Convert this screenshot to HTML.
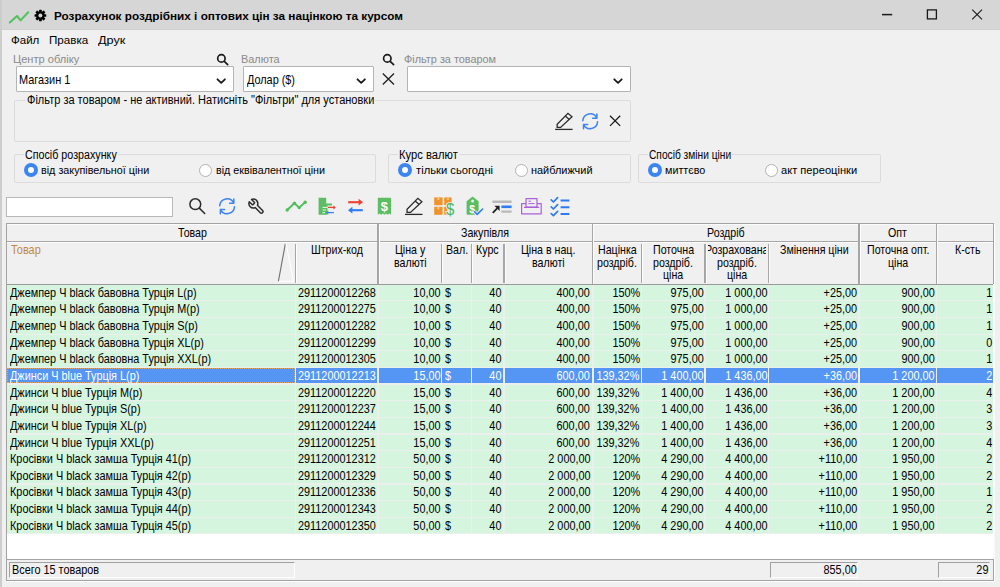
<!DOCTYPE html>
<html lang="uk">
<head>
<meta charset="utf-8">
<title>Розрахунок роздрібних і оптових цін за націнкою та курсом</title>
<style>
html,body{margin:0;padding:0;}
body{width:1000px;height:587px;overflow:hidden;background:#f0f0f0;position:relative;font-family:"Liberation Sans",sans-serif;}
.t{position:absolute;white-space:pre;}
.b{position:absolute;box-sizing:border-box;}
.clip{position:absolute;overflow:hidden;}
svg{position:absolute;overflow:visible;}
.combo{position:absolute;box-sizing:border-box;background:#fff;border:1px solid #b4b4b4;border-radius:1px;}
.grp{position:absolute;box-sizing:border-box;border:1px solid #dcdcdc;border-radius:2px;}
.lgbg{position:absolute;background:#f0f0f0;}
.radio{position:absolute;box-sizing:border-box;width:13px;height:13px;border-radius:50%;background:#fff;border:1px solid #b2b2b2;}
.radio.on{width:14px;height:14px;border:4.2px solid #3d84f4;background:#fff;}
.hsep{position:absolute;background:#a6a6a6;}
</style>
</head>
<body>
<!-- title bar -->
<div class="b" style="left:0;top:0;width:1000px;height:29.5px;background:#d6d6d6;border-bottom:1px solid #d0d0d0"></div>
<div class="b" style="left:0;top:0;width:1.5px;height:587px;background:#cdcdcd"></div>
<svg style="left:0;top:0" width="60" height="30" viewBox="0 0 60 30">
  <polyline points="9.8,22.6 17,16 20.6,20.4 28.2,12.2" fill="none" stroke="#4fc35c" stroke-width="2" stroke-linecap="round" stroke-linejoin="round"/>
  <g transform="translate(40.4,15.5) scale(0.9)">
    <g fill="#000">
      <circle r="4.6"/>
      <rect x="-1.5" y="-6.5" width="3" height="13" rx="0.6"/>
      <rect x="-1.5" y="-6.5" width="3" height="13" rx="0.6" transform="rotate(45)"/>
      <rect x="-1.5" y="-6.5" width="3" height="13" rx="0.6" transform="rotate(90)"/>
      <rect x="-1.5" y="-6.5" width="3" height="13" rx="0.6" transform="rotate(135)"/>
    </g>
    <circle r="2.2" fill="#d6d6d6"/>
  </g>
</svg>
<svg style="left:870px;top:0" width="130" height="30" viewBox="870 0 130 30">
  <line x1="882" y1="14.6" x2="892.2" y2="14.6" stroke="#1a1a1a" stroke-width="1.5"/>
  <rect x="927.4" y="9.9" width="9" height="9" fill="none" stroke="#1a1a1a" stroke-width="1.3"/>
  <path d="M972.2 9.7 L982 19.3 M982 9.7 L972.2 19.3" stroke="#1a1a1a" stroke-width="1.1" fill="none"/>
</svg>

<!-- combos -->
<div class="combo" style="left:16px;top:66px;width:218px;height:26px"></div>
<div class="combo" style="left:243px;top:66px;width:131px;height:26px"></div>
<div class="combo" style="left:407px;top:66px;width:224px;height:26px"></div>
<svg style="left:0;top:50px" width="1000" height="100" viewBox="0 50 1000 100">
  <g fill="none" stroke="#1a1a1a" stroke-width="1.8" stroke-linecap="round" stroke-linejoin="round">
    <polyline points="217.5,79.3 221.2,82.9 224.9,79.3"/>
    <polyline points="357.5,79.3 361.2,82.9 364.9,79.3"/>
    <polyline points="614.3,79.3 618,82.9 621.7,79.3"/>
  </g>
  <g fill="none" stroke="#1a1a1a" stroke-width="1.7" stroke-linecap="round">
    <!-- search icons -->
    <circle cx="221.4" cy="58.4" r="3.7"/><line x1="224.3" y1="61.3" x2="227.7" y2="64.6"/>
    <circle cx="387.3" cy="58.4" r="3.7"/><line x1="390.2" y1="61.3" x2="393.6" y2="64.6"/>
  </g>
  <!-- clear X -->
  <path d="M382.8 73.5 L394 84.5 M394 73.5 L382.8 84.5" stroke="#1a1a1a" stroke-width="1.2" fill="none"/>
  <!-- group box icons -->
  <path d="M610 115.7 L620.2 125.9 M620.2 115.7 L610 125.9" stroke="#1a1a1a" stroke-width="1.3" fill="none"/>
  <path d="M582.82 120.78 A7.4 7.4 0 0 1 596.91 118.17 M596.91 113.97 V118.17 H592.71 M597.58 121.82 A7.4 7.4 0 0 1 583.49 124.43 M583.49 128.63 V124.43 H587.69" fill="none" stroke="#3d84f4" stroke-width="1.5" stroke-linecap="round" stroke-linejoin="round"/>
  <g fill="none" stroke="#2b2b2b" stroke-width="1.3" stroke-linejoin="miter" stroke-linecap="butt"><path d="M555.10 129.40 L572.60 129.40"/><path d="M557.15 127.40 L557.15 124.30 L567.95 113.30 L572.00 116.70 L560.60 127.40 Z M565.25 116.05 L569.30 119.40"/></g>
</svg>

<!-- group boxes -->
<div class="grp" style="left:14px;top:100.3px;width:617px;height:42px"></div>
<div class="lgbg" style="left:25px;top:94px;width:350px;height:12px"></div>
<div class="grp" style="left:14px;top:154px;width:361.5px;height:29px"></div>
<div class="lgbg" style="left:24px;top:150px;width:94px;height:10px"></div>
<div class="grp" style="left:388.3px;top:154px;width:243px;height:29px"></div>
<div class="lgbg" style="left:397.5px;top:150px;width:61.5px;height:10px"></div>
<div class="grp" style="left:638.4px;top:154px;width:243px;height:29px"></div>
<div class="lgbg" style="left:647.5px;top:150px;width:84.5px;height:10px"></div>
<div class="radio on" style="left:23.9px;top:163.1px"></div>
<div class="radio" style="left:199.2px;top:163.6px"></div>
<div class="radio on" style="left:398px;top:163.1px"></div>
<div class="radio" style="left:514.7px;top:163.6px"></div>
<div class="radio on" style="left:647.8px;top:163.1px"></div>
<div class="radio" style="left:764.7px;top:163.6px"></div>

<!-- search box -->
<div class="b" style="left:6.3px;top:197px;width:166.4px;height:19.6px;background:#fff;border:1px solid #b8b8b8"></div>

<svg style="left:180px;top:190px" width="420" height="34" viewBox="180 190 420 34">
  <!-- search -->
  <g fill="none" stroke="#2b2b2b" stroke-width="1.5" stroke-linecap="round">
    <circle cx="195.3" cy="204.2" r="5.4"/><line x1="199.5" y1="208.4" x2="204.7" y2="213.5"/>
  </g>
  <!-- refresh -->
  <path d="M219.72 205.78 A7.4 7.4 0 0 1 233.81 203.17 M233.81 198.97 V203.17 H229.61 M234.48 206.82 A7.4 7.4 0 0 1 220.39 209.43 M220.39 213.63 V209.43 H224.59" fill="none" stroke="#3d84f4" stroke-width="1.5" stroke-linecap="round" stroke-linejoin="round"/>
  <!-- wrench (mirrored feather tool) -->
  <g transform="translate(265.2,197.6) scale(-0.74,0.74)" fill="none" stroke="#2b2b2b" stroke-width="2" stroke-linecap="round" stroke-linejoin="round">
    <path d="M14.7 6.3a1 1 0 0 0 0 1.4l1.6 1.6a1 1 0 0 0 1.4 0l3.77-3.77a6 6 0 0 1-7.94 7.94l-6.91 6.91a2.12 2.12 0 0 1-3-3l6.91-6.91a6 6 0 0 1 7.94-7.94l-3.76 3.76z"/>
  </g>
  <!-- chart -->
  <g stroke="#4fbf5b" fill="#4fbf5b">
    <polyline points="287.2,210 294.4,203.2 299.2,207.6 305.2,202.2" fill="none" stroke-width="1.9" stroke-linejoin="round" stroke-linecap="round"/>
    <circle cx="287.2" cy="210" r="1.7" stroke="none"/><circle cx="294.4" cy="203.2" r="1.7" stroke="none"/><circle cx="299.2" cy="207.6" r="1.7" stroke="none"/><circle cx="305.2" cy="202.2" r="1.7" stroke="none"/>
  </g>
  <!-- doc with arrows -->
  <path d="M318.6 197.8 H326.2 V203.4 H332 V205.4 H327.5 V214.8 H318.6 Z" fill="#5cbd63"/>
  <path d="M322.5 207.4 H327.5 M322.5 210 H326 M322.5 212.6 H325" stroke="#e8f6ea" stroke-width="1" fill="none"/>
  <path d="M328 207.4 H335" stroke="#ea4335" stroke-width="1.3" fill="none"/><path d="M333.4 205.4 L335.8 207.4 L333.4 209.4 Z" fill="#ea4335"/>
  <path d="M327 212.6 H334" stroke="#3d84f4" stroke-width="1.3" fill="none"/><path d="M328.4 210.6 L326 212.6 L328.4 214.6 Z" fill="#3d84f4"/>
  <!-- red/blue arrows -->
  <path d="M348.2 202.2 H359.5" stroke="#ea4335" stroke-width="2.1" fill="none"/><path d="M358.6 198.8 L363 202.2 L358.6 205.6 Z" fill="#ea4335"/>
  <path d="M351.5 210.2 H362.8" stroke="#2f7bf5" stroke-width="2.1" fill="none"/><path d="M352.4 206.8 L348 210.2 L352.4 213.6 Z" fill="#2f7bf5"/>
  <!-- receipt -->
  <path d="M377.8 197.8 H391 V214.8 L389.35 213.4 L387.7 214.8 L386.05 213.4 L384.4 214.8 L382.75 213.4 L381.1 214.8 L379.45 213.4 L377.8 214.8 Z" fill="#5cbd63"/>
  <text x="384.4" y="210.6" font-family="Liberation Sans, sans-serif" font-weight="bold" font-size="13" fill="#fff" text-anchor="middle">$</text>
  <!-- pencil -->
  <g fill="none" stroke="#2b2b2b" stroke-width="1.3" stroke-linejoin="miter" stroke-linecap="butt"><path d="M405.00 214.40 L422.50 214.40"/><path d="M407.05 212.40 L407.05 209.30 L417.85 198.30 L421.90 201.70 L410.50 212.40 Z M415.15 201.05 L419.20 204.40"/></g>
  <!-- boxes + $ -->
  <g fill="#f0932b">
    <rect x="434.2" y="197.4" width="8.4" height="7.8"/><rect x="444.2" y="197.4" width="7.4" height="7.8"/>
    <rect x="434.2" y="206.8" width="8.4" height="8"/><rect x="444.2" y="206.8" width="3" height="8"/>
  </g>
  <g fill="#f7c58a"><rect x="437.4" y="197.4" width="2" height="2.6"/><rect x="446.9" y="197.4" width="2" height="2.6"/><rect x="437.4" y="206.8" width="2" height="2.6"/></g>
  <text x="450.2" y="215.2" font-family="Liberation Sans, sans-serif" font-size="17" transform="translate(450.2 0) scale(0.88 1) translate(-450.2 0)" fill="#4cb85a" text-anchor="middle" stroke="#f0f0f0" stroke-width="1.6" paint-order="stroke">$</text>
  <!-- tag -->
  <path d="M472.6 196.4 L478.6 201.2 V213.6 a1.2 1.2 0 0 1 -1.2 1.2 H467.8 a1.2 1.2 0 0 1 -1.2 -1.2 V201.2 Z" fill="#5cbd63"/>
  <circle cx="472.6" cy="200.9" r="1.5" fill="#f0f0f0"/>
  <text x="472.2" y="213.4" font-family="Liberation Sans, sans-serif" font-weight="bold" font-size="10.5" fill="#fff" text-anchor="middle">$</text>
  <path d="M474.6 211.8 L477.2 214.4 L482.6 209" stroke="#f0f0f0" stroke-width="3.4" fill="none"/>
  <path d="M474.6 211.8 L477.2 214.4 L482.6 209" stroke="#2f7bf5" stroke-width="1.6" fill="none" stroke-linecap="round" stroke-linejoin="round"/>
  <!-- arrow lines -->
  <path d="M492.4 201.8 H511.6 M501.4 211.6 H511.6" stroke="#b9b9b9" stroke-width="2.4" fill="none"/>
  <path d="M501.4 206.8 H511.6" stroke="#2f7bf5" stroke-width="2.6" fill="none"/>
  <path d="M492.8 212.8 L497.6 207.8" stroke="#222" stroke-width="1.8" fill="none"/><path d="M494.4 205.8 H499.6 V211 Z" fill="#222"/>
  <!-- printer -->
  <g fill="none" stroke="#a862d6" stroke-width="1.2" stroke-linejoin="round">
    <path d="M526 203.6 H521.6 V213.8 H541.2 V203.6 H537"/>
    <rect x="526" y="198.6" width="11" height="8.6"/>
    <path d="M524 207.4 H539.2"/>
    <path d="M528.4 201.2 H531 M528.4 203.6 H534.6" stroke-width="1"/>
  </g>
  <!-- checklist -->
  <g fill="none" stroke="#2f7bf5" stroke-linecap="round" stroke-linejoin="round">
    <path d="M551.2 199.9 L553.4 202 L557.6 197.6 M551.2 206.9 L553.4 209 L557.6 204.6 M551.2 213.6 L553.4 215.6 L557.6 211.4" stroke-width="1.7"/>
    <path d="M560.6 200.4 H569.4 M560.6 207.2 H569.4 M560.6 214 H569.4" stroke-width="2" stroke-linecap="butt"/>
  </g>
</svg>


<!-- grid -->
<div class="b" style="left:6.3px;top:223px;width:987.6px;height:358px;background:#fff;border:1px solid #a3a3a3;box-shadow:1px 1px 0 #fff"></div>
<div class="b" style="left:7.3px;top:224px;width:985.6px;height:59.6px;background:#f0f0f0"></div>
<div class="b" style="left:7.3px;top:224px;width:985.6px;height:1px;background:#fdfdfd"></div>
<div class="b" style="left:7.3px;top:240.70px;width:985.70px;height:1.5px;background:#a6a6a6"></div>
<div class="b" style="left:7.3px;top:242.20px;width:985.70px;height:1px;background:#fdfdfd"></div>
<div class="b" style="left:377.10px;top:223.8px;width:1.5px;height:60.00px;background:#a6a6a6"></div>
<div class="b" style="left:378.60px;top:223.8px;width:1px;height:60.00px;background:#fdfdfd"></div>
<div class="b" style="left:591.80px;top:223.8px;width:1.5px;height:60.00px;background:#a6a6a6"></div>
<div class="b" style="left:593.30px;top:223.8px;width:1px;height:60.00px;background:#fdfdfd"></div>
<div class="b" style="left:858.30px;top:223.8px;width:1.5px;height:60.00px;background:#a6a6a6"></div>
<div class="b" style="left:859.80px;top:223.8px;width:1px;height:60.00px;background:#fdfdfd"></div>
<div class="b" style="left:935.60px;top:223.8px;width:1.5px;height:60.00px;background:#a6a6a6"></div>
<div class="b" style="left:937.10px;top:223.8px;width:1px;height:60.00px;background:#fdfdfd"></div>
<div class="b" style="left:294.60px;top:244px;width:1.5px;height:38.60px;background:#a6a6a6"></div>
<div class="b" style="left:296.10px;top:244px;width:1px;height:38.60px;background:#fdfdfd"></div>
<div class="b" style="left:440.60px;top:244px;width:1.5px;height:38.60px;background:#a6a6a6"></div>
<div class="b" style="left:442.10px;top:244px;width:1px;height:38.60px;background:#fdfdfd"></div>
<div class="b" style="left:470.60px;top:244px;width:1.5px;height:38.60px;background:#a6a6a6"></div>
<div class="b" style="left:472.10px;top:244px;width:1px;height:38.60px;background:#fdfdfd"></div>
<div class="b" style="left:503.10px;top:244px;width:1.5px;height:38.60px;background:#a6a6a6"></div>
<div class="b" style="left:504.60px;top:244px;width:1px;height:38.60px;background:#fdfdfd"></div>
<div class="b" style="left:640.60px;top:244px;width:1.5px;height:38.60px;background:#a6a6a6"></div>
<div class="b" style="left:642.10px;top:244px;width:1px;height:38.60px;background:#fdfdfd"></div>
<div class="b" style="left:704.30px;top:244px;width:1.5px;height:38.60px;background:#a6a6a6"></div>
<div class="b" style="left:705.80px;top:244px;width:1px;height:38.60px;background:#fdfdfd"></div>
<div class="b" style="left:767.60px;top:244px;width:1.5px;height:38.60px;background:#a6a6a6"></div>
<div class="b" style="left:769.10px;top:244px;width:1px;height:38.60px;background:#fdfdfd"></div>
<div class="b" style="left:7.3px;top:283.6px;width:985.6px;height:1.2px;background:#9a9a9a"></div>
<svg style="left:270px;top:240px" width="30" height="45" viewBox="270 240 30 45"><path d="M285.3 243.8 L278.4 281.4" stroke="#707070" stroke-width="1.1" fill="none"/><path d="M286.1 243.8 L293.5 281.4 H278.7" stroke="#fff" stroke-width="1.1" fill="none"/></svg>
<div class="b" style="left:7.3px;top:284.6px;width:985.6px;height:249.8px;background:#ebf0ec"></div>
<div class="b" style="left:7.20px;top:284.80px;width:287.40px;height:15.45px;background:#d5f5df"></div>
<div class="b" style="left:296.40px;top:284.80px;width:80.70px;height:15.45px;background:#d5f5df"></div>
<div class="b" style="left:378.90px;top:284.80px;width:61.70px;height:15.45px;background:#d5f5df"></div>
<div class="b" style="left:442.40px;top:284.80px;width:28.20px;height:15.45px;background:#d5f5df"></div>
<div class="b" style="left:472.40px;top:284.80px;width:30.70px;height:15.45px;background:#d5f5df"></div>
<div class="b" style="left:504.90px;top:284.80px;width:86.90px;height:15.45px;background:#d5f5df"></div>
<div class="b" style="left:593.60px;top:284.80px;width:47.00px;height:15.45px;background:#d5f5df"></div>
<div class="b" style="left:642.40px;top:284.80px;width:61.90px;height:15.45px;background:#d5f5df"></div>
<div class="b" style="left:706.10px;top:284.80px;width:61.50px;height:15.45px;background:#d5f5df"></div>
<div class="b" style="left:769.40px;top:284.80px;width:88.90px;height:15.45px;background:#d5f5df"></div>
<div class="b" style="left:860.10px;top:284.80px;width:75.50px;height:15.45px;background:#d5f5df"></div>
<div class="b" style="left:937.40px;top:284.80px;width:55.20px;height:15.45px;background:#d5f5df"></div>
<div class="b" style="left:7.20px;top:301.44px;width:287.40px;height:15.45px;background:#d5f5df"></div>
<div class="b" style="left:296.40px;top:301.44px;width:80.70px;height:15.45px;background:#d5f5df"></div>
<div class="b" style="left:378.90px;top:301.44px;width:61.70px;height:15.45px;background:#d5f5df"></div>
<div class="b" style="left:442.40px;top:301.44px;width:28.20px;height:15.45px;background:#d5f5df"></div>
<div class="b" style="left:472.40px;top:301.44px;width:30.70px;height:15.45px;background:#d5f5df"></div>
<div class="b" style="left:504.90px;top:301.44px;width:86.90px;height:15.45px;background:#d5f5df"></div>
<div class="b" style="left:593.60px;top:301.44px;width:47.00px;height:15.45px;background:#d5f5df"></div>
<div class="b" style="left:642.40px;top:301.44px;width:61.90px;height:15.45px;background:#d5f5df"></div>
<div class="b" style="left:706.10px;top:301.44px;width:61.50px;height:15.45px;background:#d5f5df"></div>
<div class="b" style="left:769.40px;top:301.44px;width:88.90px;height:15.45px;background:#d5f5df"></div>
<div class="b" style="left:860.10px;top:301.44px;width:75.50px;height:15.45px;background:#d5f5df"></div>
<div class="b" style="left:937.40px;top:301.44px;width:55.20px;height:15.45px;background:#d5f5df"></div>
<div class="b" style="left:7.20px;top:318.09px;width:287.40px;height:15.45px;background:#d5f5df"></div>
<div class="b" style="left:296.40px;top:318.09px;width:80.70px;height:15.45px;background:#d5f5df"></div>
<div class="b" style="left:378.90px;top:318.09px;width:61.70px;height:15.45px;background:#d5f5df"></div>
<div class="b" style="left:442.40px;top:318.09px;width:28.20px;height:15.45px;background:#d5f5df"></div>
<div class="b" style="left:472.40px;top:318.09px;width:30.70px;height:15.45px;background:#d5f5df"></div>
<div class="b" style="left:504.90px;top:318.09px;width:86.90px;height:15.45px;background:#d5f5df"></div>
<div class="b" style="left:593.60px;top:318.09px;width:47.00px;height:15.45px;background:#d5f5df"></div>
<div class="b" style="left:642.40px;top:318.09px;width:61.90px;height:15.45px;background:#d5f5df"></div>
<div class="b" style="left:706.10px;top:318.09px;width:61.50px;height:15.45px;background:#d5f5df"></div>
<div class="b" style="left:769.40px;top:318.09px;width:88.90px;height:15.45px;background:#d5f5df"></div>
<div class="b" style="left:860.10px;top:318.09px;width:75.50px;height:15.45px;background:#d5f5df"></div>
<div class="b" style="left:937.40px;top:318.09px;width:55.20px;height:15.45px;background:#d5f5df"></div>
<div class="b" style="left:7.20px;top:334.74px;width:287.40px;height:15.45px;background:#d5f5df"></div>
<div class="b" style="left:296.40px;top:334.74px;width:80.70px;height:15.45px;background:#d5f5df"></div>
<div class="b" style="left:378.90px;top:334.74px;width:61.70px;height:15.45px;background:#d5f5df"></div>
<div class="b" style="left:442.40px;top:334.74px;width:28.20px;height:15.45px;background:#d5f5df"></div>
<div class="b" style="left:472.40px;top:334.74px;width:30.70px;height:15.45px;background:#d5f5df"></div>
<div class="b" style="left:504.90px;top:334.74px;width:86.90px;height:15.45px;background:#d5f5df"></div>
<div class="b" style="left:593.60px;top:334.74px;width:47.00px;height:15.45px;background:#d5f5df"></div>
<div class="b" style="left:642.40px;top:334.74px;width:61.90px;height:15.45px;background:#d5f5df"></div>
<div class="b" style="left:706.10px;top:334.74px;width:61.50px;height:15.45px;background:#d5f5df"></div>
<div class="b" style="left:769.40px;top:334.74px;width:88.90px;height:15.45px;background:#d5f5df"></div>
<div class="b" style="left:860.10px;top:334.74px;width:75.50px;height:15.45px;background:#d5f5df"></div>
<div class="b" style="left:937.40px;top:334.74px;width:55.20px;height:15.45px;background:#d5f5df"></div>
<div class="b" style="left:7.20px;top:351.38px;width:287.40px;height:15.45px;background:#d5f5df"></div>
<div class="b" style="left:296.40px;top:351.38px;width:80.70px;height:15.45px;background:#d5f5df"></div>
<div class="b" style="left:378.90px;top:351.38px;width:61.70px;height:15.45px;background:#d5f5df"></div>
<div class="b" style="left:442.40px;top:351.38px;width:28.20px;height:15.45px;background:#d5f5df"></div>
<div class="b" style="left:472.40px;top:351.38px;width:30.70px;height:15.45px;background:#d5f5df"></div>
<div class="b" style="left:504.90px;top:351.38px;width:86.90px;height:15.45px;background:#d5f5df"></div>
<div class="b" style="left:593.60px;top:351.38px;width:47.00px;height:15.45px;background:#d5f5df"></div>
<div class="b" style="left:642.40px;top:351.38px;width:61.90px;height:15.45px;background:#d5f5df"></div>
<div class="b" style="left:706.10px;top:351.38px;width:61.50px;height:15.45px;background:#d5f5df"></div>
<div class="b" style="left:769.40px;top:351.38px;width:88.90px;height:15.45px;background:#d5f5df"></div>
<div class="b" style="left:860.10px;top:351.38px;width:75.50px;height:15.45px;background:#d5f5df"></div>
<div class="b" style="left:937.40px;top:351.38px;width:55.20px;height:15.45px;background:#d5f5df"></div>
<div class="b" style="left:7.20px;top:368.02px;width:287.40px;height:15.45px;background:#5596f5;border:1px dotted #dba46a"></div>
<div class="b" style="left:296.40px;top:368.02px;width:80.70px;height:15.45px;background:#5596f5"></div>
<div class="b" style="left:378.90px;top:368.02px;width:61.70px;height:15.45px;background:#5596f5"></div>
<div class="b" style="left:442.40px;top:368.02px;width:28.20px;height:15.45px;background:#5596f5"></div>
<div class="b" style="left:472.40px;top:368.02px;width:30.70px;height:15.45px;background:#5596f5"></div>
<div class="b" style="left:504.90px;top:368.02px;width:86.90px;height:15.45px;background:#5596f5"></div>
<div class="b" style="left:593.60px;top:368.02px;width:47.00px;height:15.45px;background:#5596f5"></div>
<div class="b" style="left:642.40px;top:368.02px;width:61.90px;height:15.45px;background:#5596f5"></div>
<div class="b" style="left:706.10px;top:368.02px;width:61.50px;height:15.45px;background:#5596f5"></div>
<div class="b" style="left:769.40px;top:368.02px;width:88.90px;height:15.45px;background:#5596f5"></div>
<div class="b" style="left:860.10px;top:368.02px;width:75.50px;height:15.45px;background:#5596f5"></div>
<div class="b" style="left:937.40px;top:368.02px;width:55.20px;height:15.45px;background:#5596f5"></div>
<div class="b" style="left:7.20px;top:384.67px;width:287.40px;height:15.45px;background:#d5f5df"></div>
<div class="b" style="left:296.40px;top:384.67px;width:80.70px;height:15.45px;background:#d5f5df"></div>
<div class="b" style="left:378.90px;top:384.67px;width:61.70px;height:15.45px;background:#d5f5df"></div>
<div class="b" style="left:442.40px;top:384.67px;width:28.20px;height:15.45px;background:#d5f5df"></div>
<div class="b" style="left:472.40px;top:384.67px;width:30.70px;height:15.45px;background:#d5f5df"></div>
<div class="b" style="left:504.90px;top:384.67px;width:86.90px;height:15.45px;background:#d5f5df"></div>
<div class="b" style="left:593.60px;top:384.67px;width:47.00px;height:15.45px;background:#d5f5df"></div>
<div class="b" style="left:642.40px;top:384.67px;width:61.90px;height:15.45px;background:#d5f5df"></div>
<div class="b" style="left:706.10px;top:384.67px;width:61.50px;height:15.45px;background:#d5f5df"></div>
<div class="b" style="left:769.40px;top:384.67px;width:88.90px;height:15.45px;background:#d5f5df"></div>
<div class="b" style="left:860.10px;top:384.67px;width:75.50px;height:15.45px;background:#d5f5df"></div>
<div class="b" style="left:937.40px;top:384.67px;width:55.20px;height:15.45px;background:#d5f5df"></div>
<div class="b" style="left:7.20px;top:401.31px;width:287.40px;height:15.45px;background:#d5f5df"></div>
<div class="b" style="left:296.40px;top:401.31px;width:80.70px;height:15.45px;background:#d5f5df"></div>
<div class="b" style="left:378.90px;top:401.31px;width:61.70px;height:15.45px;background:#d5f5df"></div>
<div class="b" style="left:442.40px;top:401.31px;width:28.20px;height:15.45px;background:#d5f5df"></div>
<div class="b" style="left:472.40px;top:401.31px;width:30.70px;height:15.45px;background:#d5f5df"></div>
<div class="b" style="left:504.90px;top:401.31px;width:86.90px;height:15.45px;background:#d5f5df"></div>
<div class="b" style="left:593.60px;top:401.31px;width:47.00px;height:15.45px;background:#d5f5df"></div>
<div class="b" style="left:642.40px;top:401.31px;width:61.90px;height:15.45px;background:#d5f5df"></div>
<div class="b" style="left:706.10px;top:401.31px;width:61.50px;height:15.45px;background:#d5f5df"></div>
<div class="b" style="left:769.40px;top:401.31px;width:88.90px;height:15.45px;background:#d5f5df"></div>
<div class="b" style="left:860.10px;top:401.31px;width:75.50px;height:15.45px;background:#d5f5df"></div>
<div class="b" style="left:937.40px;top:401.31px;width:55.20px;height:15.45px;background:#d5f5df"></div>
<div class="b" style="left:7.20px;top:417.96px;width:287.40px;height:15.45px;background:#d5f5df"></div>
<div class="b" style="left:296.40px;top:417.96px;width:80.70px;height:15.45px;background:#d5f5df"></div>
<div class="b" style="left:378.90px;top:417.96px;width:61.70px;height:15.45px;background:#d5f5df"></div>
<div class="b" style="left:442.40px;top:417.96px;width:28.20px;height:15.45px;background:#d5f5df"></div>
<div class="b" style="left:472.40px;top:417.96px;width:30.70px;height:15.45px;background:#d5f5df"></div>
<div class="b" style="left:504.90px;top:417.96px;width:86.90px;height:15.45px;background:#d5f5df"></div>
<div class="b" style="left:593.60px;top:417.96px;width:47.00px;height:15.45px;background:#d5f5df"></div>
<div class="b" style="left:642.40px;top:417.96px;width:61.90px;height:15.45px;background:#d5f5df"></div>
<div class="b" style="left:706.10px;top:417.96px;width:61.50px;height:15.45px;background:#d5f5df"></div>
<div class="b" style="left:769.40px;top:417.96px;width:88.90px;height:15.45px;background:#d5f5df"></div>
<div class="b" style="left:860.10px;top:417.96px;width:75.50px;height:15.45px;background:#d5f5df"></div>
<div class="b" style="left:937.40px;top:417.96px;width:55.20px;height:15.45px;background:#d5f5df"></div>
<div class="b" style="left:7.20px;top:434.61px;width:287.40px;height:15.45px;background:#d5f5df"></div>
<div class="b" style="left:296.40px;top:434.61px;width:80.70px;height:15.45px;background:#d5f5df"></div>
<div class="b" style="left:378.90px;top:434.61px;width:61.70px;height:15.45px;background:#d5f5df"></div>
<div class="b" style="left:442.40px;top:434.61px;width:28.20px;height:15.45px;background:#d5f5df"></div>
<div class="b" style="left:472.40px;top:434.61px;width:30.70px;height:15.45px;background:#d5f5df"></div>
<div class="b" style="left:504.90px;top:434.61px;width:86.90px;height:15.45px;background:#d5f5df"></div>
<div class="b" style="left:593.60px;top:434.61px;width:47.00px;height:15.45px;background:#d5f5df"></div>
<div class="b" style="left:642.40px;top:434.61px;width:61.90px;height:15.45px;background:#d5f5df"></div>
<div class="b" style="left:706.10px;top:434.61px;width:61.50px;height:15.45px;background:#d5f5df"></div>
<div class="b" style="left:769.40px;top:434.61px;width:88.90px;height:15.45px;background:#d5f5df"></div>
<div class="b" style="left:860.10px;top:434.61px;width:75.50px;height:15.45px;background:#d5f5df"></div>
<div class="b" style="left:937.40px;top:434.61px;width:55.20px;height:15.45px;background:#d5f5df"></div>
<div class="b" style="left:7.20px;top:451.25px;width:287.40px;height:15.45px;background:#d5f5df"></div>
<div class="b" style="left:296.40px;top:451.25px;width:80.70px;height:15.45px;background:#d5f5df"></div>
<div class="b" style="left:378.90px;top:451.25px;width:61.70px;height:15.45px;background:#d5f5df"></div>
<div class="b" style="left:442.40px;top:451.25px;width:28.20px;height:15.45px;background:#d5f5df"></div>
<div class="b" style="left:472.40px;top:451.25px;width:30.70px;height:15.45px;background:#d5f5df"></div>
<div class="b" style="left:504.90px;top:451.25px;width:86.90px;height:15.45px;background:#d5f5df"></div>
<div class="b" style="left:593.60px;top:451.25px;width:47.00px;height:15.45px;background:#d5f5df"></div>
<div class="b" style="left:642.40px;top:451.25px;width:61.90px;height:15.45px;background:#d5f5df"></div>
<div class="b" style="left:706.10px;top:451.25px;width:61.50px;height:15.45px;background:#d5f5df"></div>
<div class="b" style="left:769.40px;top:451.25px;width:88.90px;height:15.45px;background:#d5f5df"></div>
<div class="b" style="left:860.10px;top:451.25px;width:75.50px;height:15.45px;background:#d5f5df"></div>
<div class="b" style="left:937.40px;top:451.25px;width:55.20px;height:15.45px;background:#d5f5df"></div>
<div class="b" style="left:7.20px;top:467.89px;width:287.40px;height:15.45px;background:#d5f5df"></div>
<div class="b" style="left:296.40px;top:467.89px;width:80.70px;height:15.45px;background:#d5f5df"></div>
<div class="b" style="left:378.90px;top:467.89px;width:61.70px;height:15.45px;background:#d5f5df"></div>
<div class="b" style="left:442.40px;top:467.89px;width:28.20px;height:15.45px;background:#d5f5df"></div>
<div class="b" style="left:472.40px;top:467.89px;width:30.70px;height:15.45px;background:#d5f5df"></div>
<div class="b" style="left:504.90px;top:467.89px;width:86.90px;height:15.45px;background:#d5f5df"></div>
<div class="b" style="left:593.60px;top:467.89px;width:47.00px;height:15.45px;background:#d5f5df"></div>
<div class="b" style="left:642.40px;top:467.89px;width:61.90px;height:15.45px;background:#d5f5df"></div>
<div class="b" style="left:706.10px;top:467.89px;width:61.50px;height:15.45px;background:#d5f5df"></div>
<div class="b" style="left:769.40px;top:467.89px;width:88.90px;height:15.45px;background:#d5f5df"></div>
<div class="b" style="left:860.10px;top:467.89px;width:75.50px;height:15.45px;background:#d5f5df"></div>
<div class="b" style="left:937.40px;top:467.89px;width:55.20px;height:15.45px;background:#d5f5df"></div>
<div class="b" style="left:7.20px;top:484.54px;width:287.40px;height:15.45px;background:#d5f5df"></div>
<div class="b" style="left:296.40px;top:484.54px;width:80.70px;height:15.45px;background:#d5f5df"></div>
<div class="b" style="left:378.90px;top:484.54px;width:61.70px;height:15.45px;background:#d5f5df"></div>
<div class="b" style="left:442.40px;top:484.54px;width:28.20px;height:15.45px;background:#d5f5df"></div>
<div class="b" style="left:472.40px;top:484.54px;width:30.70px;height:15.45px;background:#d5f5df"></div>
<div class="b" style="left:504.90px;top:484.54px;width:86.90px;height:15.45px;background:#d5f5df"></div>
<div class="b" style="left:593.60px;top:484.54px;width:47.00px;height:15.45px;background:#d5f5df"></div>
<div class="b" style="left:642.40px;top:484.54px;width:61.90px;height:15.45px;background:#d5f5df"></div>
<div class="b" style="left:706.10px;top:484.54px;width:61.50px;height:15.45px;background:#d5f5df"></div>
<div class="b" style="left:769.40px;top:484.54px;width:88.90px;height:15.45px;background:#d5f5df"></div>
<div class="b" style="left:860.10px;top:484.54px;width:75.50px;height:15.45px;background:#d5f5df"></div>
<div class="b" style="left:937.40px;top:484.54px;width:55.20px;height:15.45px;background:#d5f5df"></div>
<div class="b" style="left:7.20px;top:501.19px;width:287.40px;height:15.45px;background:#d5f5df"></div>
<div class="b" style="left:296.40px;top:501.19px;width:80.70px;height:15.45px;background:#d5f5df"></div>
<div class="b" style="left:378.90px;top:501.19px;width:61.70px;height:15.45px;background:#d5f5df"></div>
<div class="b" style="left:442.40px;top:501.19px;width:28.20px;height:15.45px;background:#d5f5df"></div>
<div class="b" style="left:472.40px;top:501.19px;width:30.70px;height:15.45px;background:#d5f5df"></div>
<div class="b" style="left:504.90px;top:501.19px;width:86.90px;height:15.45px;background:#d5f5df"></div>
<div class="b" style="left:593.60px;top:501.19px;width:47.00px;height:15.45px;background:#d5f5df"></div>
<div class="b" style="left:642.40px;top:501.19px;width:61.90px;height:15.45px;background:#d5f5df"></div>
<div class="b" style="left:706.10px;top:501.19px;width:61.50px;height:15.45px;background:#d5f5df"></div>
<div class="b" style="left:769.40px;top:501.19px;width:88.90px;height:15.45px;background:#d5f5df"></div>
<div class="b" style="left:860.10px;top:501.19px;width:75.50px;height:15.45px;background:#d5f5df"></div>
<div class="b" style="left:937.40px;top:501.19px;width:55.20px;height:15.45px;background:#d5f5df"></div>
<div class="b" style="left:7.20px;top:517.83px;width:287.40px;height:15.45px;background:#d5f5df"></div>
<div class="b" style="left:296.40px;top:517.83px;width:80.70px;height:15.45px;background:#d5f5df"></div>
<div class="b" style="left:378.90px;top:517.83px;width:61.70px;height:15.45px;background:#d5f5df"></div>
<div class="b" style="left:442.40px;top:517.83px;width:28.20px;height:15.45px;background:#d5f5df"></div>
<div class="b" style="left:472.40px;top:517.83px;width:30.70px;height:15.45px;background:#d5f5df"></div>
<div class="b" style="left:504.90px;top:517.83px;width:86.90px;height:15.45px;background:#d5f5df"></div>
<div class="b" style="left:593.60px;top:517.83px;width:47.00px;height:15.45px;background:#d5f5df"></div>
<div class="b" style="left:642.40px;top:517.83px;width:61.90px;height:15.45px;background:#d5f5df"></div>
<div class="b" style="left:706.10px;top:517.83px;width:61.50px;height:15.45px;background:#d5f5df"></div>
<div class="b" style="left:769.40px;top:517.83px;width:88.90px;height:15.45px;background:#d5f5df"></div>
<div class="b" style="left:860.10px;top:517.83px;width:75.50px;height:15.45px;background:#d5f5df"></div>
<div class="b" style="left:937.40px;top:517.83px;width:55.20px;height:15.45px;background:#d5f5df"></div>
<div class="b" style="left:992.6px;top:284.3px;width:2.4px;height:274.4px;background:#fafafa"></div>
<!-- footer -->
<div class="b" style="left:7.3px;top:558.7px;width:985.6px;height:21.3px;background:#f0f0f0;border-top:1px solid #a3a3a3"></div>
<div class="b" style="left:8.5px;top:562px;width:286px;height:16.4px;border:1px solid #fff;border-top-color:#a0a0a0;border-left-color:#a0a0a0"></div>
<div class="b" style="left:770.4px;top:562px;width:87.6px;height:16.4px;border:1px solid #fff;border-top-color:#a0a0a0;border-left-color:#a0a0a0"></div>
<div class="b" style="left:937.9px;top:562px;width:52.6px;height:16.4px;border:1px solid #fff;border-top-color:#a0a0a0;border-left-color:#a0a0a0"></div>
<div class="t" style="left:53.90px;top:9px;font-size:11.8px;line-height:14.16px;color:#000;transform:scaleX(0.9963);transform-origin:left top;font-weight:bold;">Розрахунок роздрібних і оптових цін за націнкою та курсом</div>
<div class="t" style="left:11.35px;top:33px;font-size:11.7px;line-height:14.04px;color:#000;transform:scaleX(0.9849);transform-origin:left top;">Файл</div>
<div class="t" style="left:49.10px;top:33px;font-size:11.7px;line-height:14.04px;color:#000;transform:scaleX(0.9953);transform-origin:left top;">Правка</div>
<div class="t" style="left:97.60px;top:33px;font-size:11.7px;line-height:14.04px;color:#000;transform:scaleX(1.0812);transform-origin:left top;">Друк</div>
<div class="t" style="left:13.35px;top:53px;font-size:11.5px;line-height:13.80px;color:#8a8a8a;transform:scaleX(0.9634);transform-origin:left top;">Центр обліку</div>
<div class="t" style="left:240.60px;top:53px;font-size:11.5px;line-height:13.80px;color:#8a8a8a;transform:scaleX(0.9487);transform-origin:left top;">Валюта</div>
<div class="t" style="left:404.10px;top:53px;font-size:11.5px;line-height:13.80px;color:#8a8a8a;transform:scaleX(0.9452);transform-origin:left top;">Фільтр за товаром</div>
<div class="t" style="left:18.60px;top:72px;font-size:13px;line-height:15.60px;color:#000;transform:scaleX(0.8410);transform-origin:left top;">Магазин 1</div>
<div class="t" style="left:246.90px;top:72px;font-size:13px;line-height:15.60px;color:#000;transform:scaleX(0.8355);transform-origin:left top;">Долар ($)</div>
<div class="t" style="left:26.60px;top:93px;font-size:12.5px;line-height:15.00px;color:#000;transform:scaleX(0.8817);transform-origin:left top;">Фільтр за товаром - не активний. Натисніть "Фільтри" для установки</div>
<div class="t" style="left:25.35px;top:148px;font-size:12.5px;line-height:15.00px;color:#000;transform:scaleX(0.8573);transform-origin:left top;">Спосіб розрахунку</div>
<div class="t" style="left:40.85px;top:164px;font-size:11.5px;line-height:13.80px;color:#000;transform:scaleX(0.9361);transform-origin:left top;">від закупівельної ціни</div>
<div class="t" style="left:216.35px;top:164px;font-size:11.5px;line-height:13.80px;color:#000;transform:scaleX(0.9334);transform-origin:left top;">від еквівалентної ціни</div>
<div class="t" style="left:399.40px;top:148px;font-size:12.5px;line-height:15.00px;color:#000;transform:scaleX(0.8958);transform-origin:left top;">Курс валют</div>
<div class="t" style="left:415.60px;top:164px;font-size:11.5px;line-height:13.80px;color:#000;transform:scaleX(0.9758);transform-origin:left top;">тільки сьогодні</div>
<div class="t" style="left:531.40px;top:164px;font-size:11.5px;line-height:13.80px;color:#000;transform:scaleX(0.9493);transform-origin:left top;">найближчий</div>
<div class="t" style="left:648.90px;top:148px;font-size:12.5px;line-height:15.00px;color:#000;transform:scaleX(0.8163);transform-origin:left top;">Спосіб зміни ціни</div>
<div class="t" style="left:665.10px;top:164px;font-size:11.5px;line-height:13.80px;color:#000;transform:scaleX(0.9348);transform-origin:left top;">миттєво</div>
<div class="t" style="left:781.30px;top:164px;font-size:11.5px;line-height:13.80px;color:#000;transform:scaleX(0.9660);transform-origin:left top;">акт переоцінки</div>
<div class="t" style="left:178.03px;top:225px;font-size:13px;line-height:15.60px;color:#000;transform:scaleX(0.8180);transform-origin:left top;">Товар</div>
<div class="t" style="left:461.39px;top:225px;font-size:13px;line-height:15.60px;color:#000;transform:scaleX(0.8180);transform-origin:left top;">Закупівля</div>
<div class="t" style="left:707.13px;top:225px;font-size:13px;line-height:15.60px;color:#000;transform:scaleX(0.8180);transform-origin:left top;">Роздріб</div>
<div class="t" style="left:888.40px;top:225px;font-size:13px;line-height:15.60px;color:#000;transform:scaleX(0.8180);transform-origin:left top;">Опт</div>
<div class="t" style="left:310.75px;top:242px;font-size:13px;line-height:15.60px;color:#000;transform:scaleX(0.8180);transform-origin:left top;">Штрих-код</div>
<div class="t" style="left:395.40px;top:242px;font-size:13px;line-height:15.60px;color:#000;transform:scaleX(0.8180);transform-origin:left top;">Ціна у</div>
<div class="t" style="left:394.23px;top:255px;font-size:13px;line-height:15.60px;color:#000;transform:scaleX(0.8180);transform-origin:left top;">валюті</div>
<div class="t" style="left:446.41px;top:242px;font-size:13px;line-height:15.60px;color:#000;transform:scaleX(0.8180);transform-origin:left top;">Вал.</div>
<div class="t" style="left:476.43px;top:242px;font-size:13px;line-height:15.60px;color:#000;transform:scaleX(0.8180);transform-origin:left top;">Курс</div>
<div class="t" style="left:521.15px;top:242px;font-size:13px;line-height:15.60px;color:#000;transform:scaleX(0.8180);transform-origin:left top;">Ціна в нац.</div>
<div class="t" style="left:532.03px;top:255px;font-size:13px;line-height:15.60px;color:#000;transform:scaleX(0.8180);transform-origin:left top;">валюті</div>
<div class="t" style="left:597.74px;top:242px;font-size:13px;line-height:15.60px;color:#000;transform:scaleX(0.8180);transform-origin:left top;">Націнка</div>
<div class="t" style="left:597.16px;top:255px;font-size:13px;line-height:15.60px;color:#000;transform:scaleX(0.8180);transform-origin:left top;">роздріб.</div>
<div class="t" style="left:652.80px;top:242px;font-size:13px;line-height:15.60px;color:#000;transform:scaleX(0.8180);transform-origin:left top;">Поточна</div>
<div class="t" style="left:653.41px;top:255px;font-size:13px;line-height:15.60px;color:#000;transform:scaleX(0.8180);transform-origin:left top;">роздріб.</div>
<div class="t" style="left:663.23px;top:267px;font-size:13px;line-height:15.60px;color:#000;transform:scaleX(0.8180);transform-origin:left top;">ціна</div>
<div class="clip" style="left:707.90px;width:57.90px;top:241px;height:17px"><div class="t" style="left:-2.79px;top:1px;font-size:13px;line-height:15.60px;color:#000;transform:scaleX(0.8180);transform-origin:left top;">Розрахована</div></div>
<div class="t" style="left:716.91px;top:255px;font-size:13px;line-height:15.60px;color:#000;transform:scaleX(0.8180);transform-origin:left top;">роздріб.</div>
<div class="t" style="left:726.73px;top:267px;font-size:13px;line-height:15.60px;color:#000;transform:scaleX(0.8180);transform-origin:left top;">ціна</div>
<div class="t" style="left:779.55px;top:242px;font-size:13px;line-height:15.60px;color:#000;transform:scaleX(0.8180);transform-origin:left top;">Змінення ціни</div>
<div class="t" style="left:866.67px;top:242px;font-size:13px;line-height:15.60px;color:#000;transform:scaleX(0.8180);transform-origin:left top;">Поточна опт.</div>
<div class="t" style="left:887.73px;top:255px;font-size:13px;line-height:15.60px;color:#000;transform:scaleX(0.8180);transform-origin:left top;">ціна</div>
<div class="t" style="left:954.96px;top:242px;font-size:13px;line-height:15.60px;color:#000;transform:scaleX(0.8180);transform-origin:left top;">К-сть</div>
<div class="t" style="left:10.60px;top:242px;font-size:13px;line-height:15.60px;color:#c08a3e;transform:scaleX(0.8420);transform-origin:left top;">Товар</div>
<div class="t" style="left:9.70px;top:285px;font-size:13px;line-height:15.60px;color:#000;transform:scaleX(0.8360);transform-origin:left top;">Джемпер Ч black бавовна Турція L(р)</div>
<div class="t" style="left:298.20px;top:285px;font-size:13px;line-height:15.60px;color:#000;transform:scaleX(0.8360);transform-origin:left top;">2911200012268</div>
<div class="t" style="right:559.90px;top:285px;font-size:13px;line-height:15.60px;color:#000;transform:scaleX(0.8360);transform-origin:right top;">10,00</div>
<div class="t" style="left:445.00px;top:285px;font-size:13px;line-height:15.60px;color:#000;transform:scaleX(0.8360);transform-origin:left top;">$</div>
<div class="t" style="right:498.60px;top:285px;font-size:13px;line-height:15.60px;color:#000;transform:scaleX(0.8360);transform-origin:right top;">40</div>
<div class="t" style="right:409.90px;top:285px;font-size:13px;line-height:15.60px;color:#000;transform:scaleX(0.8360);transform-origin:right top;">400,00</div>
<div class="t" style="right:360.20px;top:285px;font-size:13px;line-height:15.60px;color:#000;transform:scaleX(0.8360);transform-origin:right top;">150%</div>
<div class="t" style="right:296.10px;top:285px;font-size:13px;line-height:15.60px;color:#000;transform:scaleX(0.8360);transform-origin:right top;">975,00</div>
<div class="t" style="right:232.70px;top:285px;font-size:13px;line-height:15.60px;color:#000;transform:scaleX(0.8360);transform-origin:right top;">1 000,00</div>
<div class="t" style="right:143.10px;top:285px;font-size:13px;line-height:15.60px;color:#000;transform:scaleX(0.8360);transform-origin:right top;">+25,00</div>
<div class="t" style="right:65.30px;top:285px;font-size:13px;line-height:15.60px;color:#000;transform:scaleX(0.8360);transform-origin:right top;">900,00</div>
<div class="t" style="right:8.10px;top:285px;font-size:13px;line-height:15.60px;color:#000;transform:scaleX(0.8360);transform-origin:right top;">1</div>
<div class="t" style="left:9.70px;top:301px;font-size:13px;line-height:15.60px;color:#000;transform:scaleX(0.8360);transform-origin:left top;">Джемпер Ч black бавовна Турція M(р)</div>
<div class="t" style="left:298.20px;top:301px;font-size:13px;line-height:15.60px;color:#000;transform:scaleX(0.8360);transform-origin:left top;">2911200012275</div>
<div class="t" style="right:559.90px;top:301px;font-size:13px;line-height:15.60px;color:#000;transform:scaleX(0.8360);transform-origin:right top;">10,00</div>
<div class="t" style="left:445.00px;top:301px;font-size:13px;line-height:15.60px;color:#000;transform:scaleX(0.8360);transform-origin:left top;">$</div>
<div class="t" style="right:498.60px;top:301px;font-size:13px;line-height:15.60px;color:#000;transform:scaleX(0.8360);transform-origin:right top;">40</div>
<div class="t" style="right:409.90px;top:301px;font-size:13px;line-height:15.60px;color:#000;transform:scaleX(0.8360);transform-origin:right top;">400,00</div>
<div class="t" style="right:360.20px;top:301px;font-size:13px;line-height:15.60px;color:#000;transform:scaleX(0.8360);transform-origin:right top;">150%</div>
<div class="t" style="right:296.10px;top:301px;font-size:13px;line-height:15.60px;color:#000;transform:scaleX(0.8360);transform-origin:right top;">975,00</div>
<div class="t" style="right:232.70px;top:301px;font-size:13px;line-height:15.60px;color:#000;transform:scaleX(0.8360);transform-origin:right top;">1 000,00</div>
<div class="t" style="right:143.10px;top:301px;font-size:13px;line-height:15.60px;color:#000;transform:scaleX(0.8360);transform-origin:right top;">+25,00</div>
<div class="t" style="right:65.30px;top:301px;font-size:13px;line-height:15.60px;color:#000;transform:scaleX(0.8360);transform-origin:right top;">900,00</div>
<div class="t" style="right:8.10px;top:301px;font-size:13px;line-height:15.60px;color:#000;transform:scaleX(0.8360);transform-origin:right top;">1</div>
<div class="t" style="left:9.70px;top:318px;font-size:13px;line-height:15.60px;color:#000;transform:scaleX(0.8360);transform-origin:left top;">Джемпер Ч black бавовна Турція S(р)</div>
<div class="t" style="left:298.20px;top:318px;font-size:13px;line-height:15.60px;color:#000;transform:scaleX(0.8360);transform-origin:left top;">2911200012282</div>
<div class="t" style="right:559.90px;top:318px;font-size:13px;line-height:15.60px;color:#000;transform:scaleX(0.8360);transform-origin:right top;">10,00</div>
<div class="t" style="left:445.00px;top:318px;font-size:13px;line-height:15.60px;color:#000;transform:scaleX(0.8360);transform-origin:left top;">$</div>
<div class="t" style="right:498.60px;top:318px;font-size:13px;line-height:15.60px;color:#000;transform:scaleX(0.8360);transform-origin:right top;">40</div>
<div class="t" style="right:409.90px;top:318px;font-size:13px;line-height:15.60px;color:#000;transform:scaleX(0.8360);transform-origin:right top;">400,00</div>
<div class="t" style="right:360.20px;top:318px;font-size:13px;line-height:15.60px;color:#000;transform:scaleX(0.8360);transform-origin:right top;">150%</div>
<div class="t" style="right:296.10px;top:318px;font-size:13px;line-height:15.60px;color:#000;transform:scaleX(0.8360);transform-origin:right top;">975,00</div>
<div class="t" style="right:232.70px;top:318px;font-size:13px;line-height:15.60px;color:#000;transform:scaleX(0.8360);transform-origin:right top;">1 000,00</div>
<div class="t" style="right:143.10px;top:318px;font-size:13px;line-height:15.60px;color:#000;transform:scaleX(0.8360);transform-origin:right top;">+25,00</div>
<div class="t" style="right:65.30px;top:318px;font-size:13px;line-height:15.60px;color:#000;transform:scaleX(0.8360);transform-origin:right top;">900,00</div>
<div class="t" style="right:8.10px;top:318px;font-size:13px;line-height:15.60px;color:#000;transform:scaleX(0.8360);transform-origin:right top;">1</div>
<div class="t" style="left:9.70px;top:335px;font-size:13px;line-height:15.60px;color:#000;transform:scaleX(0.8360);transform-origin:left top;">Джемпер Ч black бавовна Турція XL(р)</div>
<div class="t" style="left:298.20px;top:335px;font-size:13px;line-height:15.60px;color:#000;transform:scaleX(0.8360);transform-origin:left top;">2911200012299</div>
<div class="t" style="right:559.90px;top:335px;font-size:13px;line-height:15.60px;color:#000;transform:scaleX(0.8360);transform-origin:right top;">10,00</div>
<div class="t" style="left:445.00px;top:335px;font-size:13px;line-height:15.60px;color:#000;transform:scaleX(0.8360);transform-origin:left top;">$</div>
<div class="t" style="right:498.60px;top:335px;font-size:13px;line-height:15.60px;color:#000;transform:scaleX(0.8360);transform-origin:right top;">40</div>
<div class="t" style="right:409.90px;top:335px;font-size:13px;line-height:15.60px;color:#000;transform:scaleX(0.8360);transform-origin:right top;">400,00</div>
<div class="t" style="right:360.20px;top:335px;font-size:13px;line-height:15.60px;color:#000;transform:scaleX(0.8360);transform-origin:right top;">150%</div>
<div class="t" style="right:296.10px;top:335px;font-size:13px;line-height:15.60px;color:#000;transform:scaleX(0.8360);transform-origin:right top;">975,00</div>
<div class="t" style="right:232.70px;top:335px;font-size:13px;line-height:15.60px;color:#000;transform:scaleX(0.8360);transform-origin:right top;">1 000,00</div>
<div class="t" style="right:143.10px;top:335px;font-size:13px;line-height:15.60px;color:#000;transform:scaleX(0.8360);transform-origin:right top;">+25,00</div>
<div class="t" style="right:65.30px;top:335px;font-size:13px;line-height:15.60px;color:#000;transform:scaleX(0.8360);transform-origin:right top;">900,00</div>
<div class="t" style="right:8.10px;top:335px;font-size:13px;line-height:15.60px;color:#000;transform:scaleX(0.8360);transform-origin:right top;">0</div>
<div class="t" style="left:9.70px;top:351px;font-size:13px;line-height:15.60px;color:#000;transform:scaleX(0.8360);transform-origin:left top;">Джемпер Ч black бавовна Турція XXL(р)</div>
<div class="t" style="left:298.20px;top:351px;font-size:13px;line-height:15.60px;color:#000;transform:scaleX(0.8360);transform-origin:left top;">2911200012305</div>
<div class="t" style="right:559.90px;top:351px;font-size:13px;line-height:15.60px;color:#000;transform:scaleX(0.8360);transform-origin:right top;">10,00</div>
<div class="t" style="left:445.00px;top:351px;font-size:13px;line-height:15.60px;color:#000;transform:scaleX(0.8360);transform-origin:left top;">$</div>
<div class="t" style="right:498.60px;top:351px;font-size:13px;line-height:15.60px;color:#000;transform:scaleX(0.8360);transform-origin:right top;">40</div>
<div class="t" style="right:409.90px;top:351px;font-size:13px;line-height:15.60px;color:#000;transform:scaleX(0.8360);transform-origin:right top;">400,00</div>
<div class="t" style="right:360.20px;top:351px;font-size:13px;line-height:15.60px;color:#000;transform:scaleX(0.8360);transform-origin:right top;">150%</div>
<div class="t" style="right:296.10px;top:351px;font-size:13px;line-height:15.60px;color:#000;transform:scaleX(0.8360);transform-origin:right top;">975,00</div>
<div class="t" style="right:232.70px;top:351px;font-size:13px;line-height:15.60px;color:#000;transform:scaleX(0.8360);transform-origin:right top;">1 000,00</div>
<div class="t" style="right:143.10px;top:351px;font-size:13px;line-height:15.60px;color:#000;transform:scaleX(0.8360);transform-origin:right top;">+25,00</div>
<div class="t" style="right:65.30px;top:351px;font-size:13px;line-height:15.60px;color:#000;transform:scaleX(0.8360);transform-origin:right top;">900,00</div>
<div class="t" style="right:8.10px;top:351px;font-size:13px;line-height:15.60px;color:#000;transform:scaleX(0.8360);transform-origin:right top;">1</div>
<div class="t" style="left:9.70px;top:368px;font-size:13px;line-height:15.60px;color:#fff;transform:scaleX(0.8360);transform-origin:left top;">Джинси Ч blue Турція L(р)</div>
<div class="t" style="left:298.20px;top:368px;font-size:13px;line-height:15.60px;color:#fff;transform:scaleX(0.8360);transform-origin:left top;">2911200012213</div>
<div class="t" style="right:559.90px;top:368px;font-size:13px;line-height:15.60px;color:#fff;transform:scaleX(0.8360);transform-origin:right top;">15,00</div>
<div class="t" style="left:445.00px;top:368px;font-size:13px;line-height:15.60px;color:#fff;transform:scaleX(0.8360);transform-origin:left top;">$</div>
<div class="t" style="right:498.60px;top:368px;font-size:13px;line-height:15.60px;color:#fff;transform:scaleX(0.8360);transform-origin:right top;">40</div>
<div class="t" style="right:409.90px;top:368px;font-size:13px;line-height:15.60px;color:#fff;transform:scaleX(0.8360);transform-origin:right top;">600,00</div>
<div class="t" style="right:360.20px;top:368px;font-size:13px;line-height:15.60px;color:#fff;transform:scaleX(0.8360);transform-origin:right top;">139,32%</div>
<div class="t" style="right:296.10px;top:368px;font-size:13px;line-height:15.60px;color:#fff;transform:scaleX(0.8360);transform-origin:right top;">1 400,00</div>
<div class="t" style="right:232.70px;top:368px;font-size:13px;line-height:15.60px;color:#fff;transform:scaleX(0.8360);transform-origin:right top;">1 436,00</div>
<div class="t" style="right:143.10px;top:368px;font-size:13px;line-height:15.60px;color:#fff;transform:scaleX(0.8360);transform-origin:right top;">+36,00</div>
<div class="t" style="right:65.30px;top:368px;font-size:13px;line-height:15.60px;color:#fff;transform:scaleX(0.8360);transform-origin:right top;">1 200,00</div>
<div class="t" style="right:8.10px;top:368px;font-size:13px;line-height:15.60px;color:#fff;transform:scaleX(0.8360);transform-origin:right top;">2</div>
<div class="t" style="left:9.70px;top:385px;font-size:13px;line-height:15.60px;color:#000;transform:scaleX(0.8360);transform-origin:left top;">Джинси Ч blue Турція M(р)</div>
<div class="t" style="left:298.20px;top:385px;font-size:13px;line-height:15.60px;color:#000;transform:scaleX(0.8360);transform-origin:left top;">2911200012220</div>
<div class="t" style="right:559.90px;top:385px;font-size:13px;line-height:15.60px;color:#000;transform:scaleX(0.8360);transform-origin:right top;">15,00</div>
<div class="t" style="left:445.00px;top:385px;font-size:13px;line-height:15.60px;color:#000;transform:scaleX(0.8360);transform-origin:left top;">$</div>
<div class="t" style="right:498.60px;top:385px;font-size:13px;line-height:15.60px;color:#000;transform:scaleX(0.8360);transform-origin:right top;">40</div>
<div class="t" style="right:409.90px;top:385px;font-size:13px;line-height:15.60px;color:#000;transform:scaleX(0.8360);transform-origin:right top;">600,00</div>
<div class="t" style="right:360.20px;top:385px;font-size:13px;line-height:15.60px;color:#000;transform:scaleX(0.8360);transform-origin:right top;">139,32%</div>
<div class="t" style="right:296.10px;top:385px;font-size:13px;line-height:15.60px;color:#000;transform:scaleX(0.8360);transform-origin:right top;">1 400,00</div>
<div class="t" style="right:232.70px;top:385px;font-size:13px;line-height:15.60px;color:#000;transform:scaleX(0.8360);transform-origin:right top;">1 436,00</div>
<div class="t" style="right:143.10px;top:385px;font-size:13px;line-height:15.60px;color:#000;transform:scaleX(0.8360);transform-origin:right top;">+36,00</div>
<div class="t" style="right:65.30px;top:385px;font-size:13px;line-height:15.60px;color:#000;transform:scaleX(0.8360);transform-origin:right top;">1 200,00</div>
<div class="t" style="right:8.10px;top:385px;font-size:13px;line-height:15.60px;color:#000;transform:scaleX(0.8360);transform-origin:right top;">4</div>
<div class="t" style="left:9.70px;top:401px;font-size:13px;line-height:15.60px;color:#000;transform:scaleX(0.8360);transform-origin:left top;">Джинси Ч blue Турція S(р)</div>
<div class="t" style="left:298.20px;top:401px;font-size:13px;line-height:15.60px;color:#000;transform:scaleX(0.8360);transform-origin:left top;">2911200012237</div>
<div class="t" style="right:559.90px;top:401px;font-size:13px;line-height:15.60px;color:#000;transform:scaleX(0.8360);transform-origin:right top;">15,00</div>
<div class="t" style="left:445.00px;top:401px;font-size:13px;line-height:15.60px;color:#000;transform:scaleX(0.8360);transform-origin:left top;">$</div>
<div class="t" style="right:498.60px;top:401px;font-size:13px;line-height:15.60px;color:#000;transform:scaleX(0.8360);transform-origin:right top;">40</div>
<div class="t" style="right:409.90px;top:401px;font-size:13px;line-height:15.60px;color:#000;transform:scaleX(0.8360);transform-origin:right top;">600,00</div>
<div class="t" style="right:360.20px;top:401px;font-size:13px;line-height:15.60px;color:#000;transform:scaleX(0.8360);transform-origin:right top;">139,32%</div>
<div class="t" style="right:296.10px;top:401px;font-size:13px;line-height:15.60px;color:#000;transform:scaleX(0.8360);transform-origin:right top;">1 400,00</div>
<div class="t" style="right:232.70px;top:401px;font-size:13px;line-height:15.60px;color:#000;transform:scaleX(0.8360);transform-origin:right top;">1 436,00</div>
<div class="t" style="right:143.10px;top:401px;font-size:13px;line-height:15.60px;color:#000;transform:scaleX(0.8360);transform-origin:right top;">+36,00</div>
<div class="t" style="right:65.30px;top:401px;font-size:13px;line-height:15.60px;color:#000;transform:scaleX(0.8360);transform-origin:right top;">1 200,00</div>
<div class="t" style="right:8.10px;top:401px;font-size:13px;line-height:15.60px;color:#000;transform:scaleX(0.8360);transform-origin:right top;">3</div>
<div class="t" style="left:9.70px;top:418px;font-size:13px;line-height:15.60px;color:#000;transform:scaleX(0.8360);transform-origin:left top;">Джинси Ч blue Турція XL(р)</div>
<div class="t" style="left:298.20px;top:418px;font-size:13px;line-height:15.60px;color:#000;transform:scaleX(0.8360);transform-origin:left top;">2911200012244</div>
<div class="t" style="right:559.90px;top:418px;font-size:13px;line-height:15.60px;color:#000;transform:scaleX(0.8360);transform-origin:right top;">15,00</div>
<div class="t" style="left:445.00px;top:418px;font-size:13px;line-height:15.60px;color:#000;transform:scaleX(0.8360);transform-origin:left top;">$</div>
<div class="t" style="right:498.60px;top:418px;font-size:13px;line-height:15.60px;color:#000;transform:scaleX(0.8360);transform-origin:right top;">40</div>
<div class="t" style="right:409.90px;top:418px;font-size:13px;line-height:15.60px;color:#000;transform:scaleX(0.8360);transform-origin:right top;">600,00</div>
<div class="t" style="right:360.20px;top:418px;font-size:13px;line-height:15.60px;color:#000;transform:scaleX(0.8360);transform-origin:right top;">139,32%</div>
<div class="t" style="right:296.10px;top:418px;font-size:13px;line-height:15.60px;color:#000;transform:scaleX(0.8360);transform-origin:right top;">1 400,00</div>
<div class="t" style="right:232.70px;top:418px;font-size:13px;line-height:15.60px;color:#000;transform:scaleX(0.8360);transform-origin:right top;">1 436,00</div>
<div class="t" style="right:143.10px;top:418px;font-size:13px;line-height:15.60px;color:#000;transform:scaleX(0.8360);transform-origin:right top;">+36,00</div>
<div class="t" style="right:65.30px;top:418px;font-size:13px;line-height:15.60px;color:#000;transform:scaleX(0.8360);transform-origin:right top;">1 200,00</div>
<div class="t" style="right:8.10px;top:418px;font-size:13px;line-height:15.60px;color:#000;transform:scaleX(0.8360);transform-origin:right top;">3</div>
<div class="t" style="left:9.70px;top:435px;font-size:13px;line-height:15.60px;color:#000;transform:scaleX(0.8360);transform-origin:left top;">Джинси Ч blue Турція XXL(р)</div>
<div class="t" style="left:298.20px;top:435px;font-size:13px;line-height:15.60px;color:#000;transform:scaleX(0.8360);transform-origin:left top;">2911200012251</div>
<div class="t" style="right:559.90px;top:435px;font-size:13px;line-height:15.60px;color:#000;transform:scaleX(0.8360);transform-origin:right top;">15,00</div>
<div class="t" style="left:445.00px;top:435px;font-size:13px;line-height:15.60px;color:#000;transform:scaleX(0.8360);transform-origin:left top;">$</div>
<div class="t" style="right:498.60px;top:435px;font-size:13px;line-height:15.60px;color:#000;transform:scaleX(0.8360);transform-origin:right top;">40</div>
<div class="t" style="right:409.90px;top:435px;font-size:13px;line-height:15.60px;color:#000;transform:scaleX(0.8360);transform-origin:right top;">600,00</div>
<div class="t" style="right:360.20px;top:435px;font-size:13px;line-height:15.60px;color:#000;transform:scaleX(0.8360);transform-origin:right top;">139,32%</div>
<div class="t" style="right:296.10px;top:435px;font-size:13px;line-height:15.60px;color:#000;transform:scaleX(0.8360);transform-origin:right top;">1 400,00</div>
<div class="t" style="right:232.70px;top:435px;font-size:13px;line-height:15.60px;color:#000;transform:scaleX(0.8360);transform-origin:right top;">1 436,00</div>
<div class="t" style="right:143.10px;top:435px;font-size:13px;line-height:15.60px;color:#000;transform:scaleX(0.8360);transform-origin:right top;">+36,00</div>
<div class="t" style="right:65.30px;top:435px;font-size:13px;line-height:15.60px;color:#000;transform:scaleX(0.8360);transform-origin:right top;">1 200,00</div>
<div class="t" style="right:8.10px;top:435px;font-size:13px;line-height:15.60px;color:#000;transform:scaleX(0.8360);transform-origin:right top;">4</div>
<div class="t" style="left:9.70px;top:451px;font-size:13px;line-height:15.60px;color:#000;transform:scaleX(0.8360);transform-origin:left top;">Кросівки Ч black замша Турція 41(р)</div>
<div class="t" style="left:298.20px;top:451px;font-size:13px;line-height:15.60px;color:#000;transform:scaleX(0.8360);transform-origin:left top;">2911200012312</div>
<div class="t" style="right:559.90px;top:451px;font-size:13px;line-height:15.60px;color:#000;transform:scaleX(0.8360);transform-origin:right top;">50,00</div>
<div class="t" style="left:445.00px;top:451px;font-size:13px;line-height:15.60px;color:#000;transform:scaleX(0.8360);transform-origin:left top;">$</div>
<div class="t" style="right:498.60px;top:451px;font-size:13px;line-height:15.60px;color:#000;transform:scaleX(0.8360);transform-origin:right top;">40</div>
<div class="t" style="right:409.90px;top:451px;font-size:13px;line-height:15.60px;color:#000;transform:scaleX(0.8360);transform-origin:right top;">2 000,00</div>
<div class="t" style="right:360.20px;top:451px;font-size:13px;line-height:15.60px;color:#000;transform:scaleX(0.8360);transform-origin:right top;">120%</div>
<div class="t" style="right:296.10px;top:451px;font-size:13px;line-height:15.60px;color:#000;transform:scaleX(0.8360);transform-origin:right top;">4 290,00</div>
<div class="t" style="right:232.70px;top:451px;font-size:13px;line-height:15.60px;color:#000;transform:scaleX(0.8360);transform-origin:right top;">4 400,00</div>
<div class="t" style="right:143.10px;top:451px;font-size:13px;line-height:15.60px;color:#000;transform:scaleX(0.8360);transform-origin:right top;">+110,00</div>
<div class="t" style="right:65.30px;top:451px;font-size:13px;line-height:15.60px;color:#000;transform:scaleX(0.8360);transform-origin:right top;">1 950,00</div>
<div class="t" style="right:8.10px;top:451px;font-size:13px;line-height:15.60px;color:#000;transform:scaleX(0.8360);transform-origin:right top;">2</div>
<div class="t" style="left:9.70px;top:468px;font-size:13px;line-height:15.60px;color:#000;transform:scaleX(0.8360);transform-origin:left top;">Кросівки Ч black замша Турція 42(р)</div>
<div class="t" style="left:298.20px;top:468px;font-size:13px;line-height:15.60px;color:#000;transform:scaleX(0.8360);transform-origin:left top;">2911200012329</div>
<div class="t" style="right:559.90px;top:468px;font-size:13px;line-height:15.60px;color:#000;transform:scaleX(0.8360);transform-origin:right top;">50,00</div>
<div class="t" style="left:445.00px;top:468px;font-size:13px;line-height:15.60px;color:#000;transform:scaleX(0.8360);transform-origin:left top;">$</div>
<div class="t" style="right:498.60px;top:468px;font-size:13px;line-height:15.60px;color:#000;transform:scaleX(0.8360);transform-origin:right top;">40</div>
<div class="t" style="right:409.90px;top:468px;font-size:13px;line-height:15.60px;color:#000;transform:scaleX(0.8360);transform-origin:right top;">2 000,00</div>
<div class="t" style="right:360.20px;top:468px;font-size:13px;line-height:15.60px;color:#000;transform:scaleX(0.8360);transform-origin:right top;">120%</div>
<div class="t" style="right:296.10px;top:468px;font-size:13px;line-height:15.60px;color:#000;transform:scaleX(0.8360);transform-origin:right top;">4 290,00</div>
<div class="t" style="right:232.70px;top:468px;font-size:13px;line-height:15.60px;color:#000;transform:scaleX(0.8360);transform-origin:right top;">4 400,00</div>
<div class="t" style="right:143.10px;top:468px;font-size:13px;line-height:15.60px;color:#000;transform:scaleX(0.8360);transform-origin:right top;">+110,00</div>
<div class="t" style="right:65.30px;top:468px;font-size:13px;line-height:15.60px;color:#000;transform:scaleX(0.8360);transform-origin:right top;">1 950,00</div>
<div class="t" style="right:8.10px;top:468px;font-size:13px;line-height:15.60px;color:#000;transform:scaleX(0.8360);transform-origin:right top;">2</div>
<div class="t" style="left:9.70px;top:484px;font-size:13px;line-height:15.60px;color:#000;transform:scaleX(0.8360);transform-origin:left top;">Кросівки Ч black замша Турція 43(р)</div>
<div class="t" style="left:298.20px;top:484px;font-size:13px;line-height:15.60px;color:#000;transform:scaleX(0.8360);transform-origin:left top;">2911200012336</div>
<div class="t" style="right:559.90px;top:484px;font-size:13px;line-height:15.60px;color:#000;transform:scaleX(0.8360);transform-origin:right top;">50,00</div>
<div class="t" style="left:445.00px;top:484px;font-size:13px;line-height:15.60px;color:#000;transform:scaleX(0.8360);transform-origin:left top;">$</div>
<div class="t" style="right:498.60px;top:484px;font-size:13px;line-height:15.60px;color:#000;transform:scaleX(0.8360);transform-origin:right top;">40</div>
<div class="t" style="right:409.90px;top:484px;font-size:13px;line-height:15.60px;color:#000;transform:scaleX(0.8360);transform-origin:right top;">2 000,00</div>
<div class="t" style="right:360.20px;top:484px;font-size:13px;line-height:15.60px;color:#000;transform:scaleX(0.8360);transform-origin:right top;">120%</div>
<div class="t" style="right:296.10px;top:484px;font-size:13px;line-height:15.60px;color:#000;transform:scaleX(0.8360);transform-origin:right top;">4 290,00</div>
<div class="t" style="right:232.70px;top:484px;font-size:13px;line-height:15.60px;color:#000;transform:scaleX(0.8360);transform-origin:right top;">4 400,00</div>
<div class="t" style="right:143.10px;top:484px;font-size:13px;line-height:15.60px;color:#000;transform:scaleX(0.8360);transform-origin:right top;">+110,00</div>
<div class="t" style="right:65.30px;top:484px;font-size:13px;line-height:15.60px;color:#000;transform:scaleX(0.8360);transform-origin:right top;">1 950,00</div>
<div class="t" style="right:8.10px;top:484px;font-size:13px;line-height:15.60px;color:#000;transform:scaleX(0.8360);transform-origin:right top;">1</div>
<div class="t" style="left:9.70px;top:501px;font-size:13px;line-height:15.60px;color:#000;transform:scaleX(0.8360);transform-origin:left top;">Кросівки Ч black замша Турція 44(р)</div>
<div class="t" style="left:298.20px;top:501px;font-size:13px;line-height:15.60px;color:#000;transform:scaleX(0.8360);transform-origin:left top;">2911200012343</div>
<div class="t" style="right:559.90px;top:501px;font-size:13px;line-height:15.60px;color:#000;transform:scaleX(0.8360);transform-origin:right top;">50,00</div>
<div class="t" style="left:445.00px;top:501px;font-size:13px;line-height:15.60px;color:#000;transform:scaleX(0.8360);transform-origin:left top;">$</div>
<div class="t" style="right:498.60px;top:501px;font-size:13px;line-height:15.60px;color:#000;transform:scaleX(0.8360);transform-origin:right top;">40</div>
<div class="t" style="right:409.90px;top:501px;font-size:13px;line-height:15.60px;color:#000;transform:scaleX(0.8360);transform-origin:right top;">2 000,00</div>
<div class="t" style="right:360.20px;top:501px;font-size:13px;line-height:15.60px;color:#000;transform:scaleX(0.8360);transform-origin:right top;">120%</div>
<div class="t" style="right:296.10px;top:501px;font-size:13px;line-height:15.60px;color:#000;transform:scaleX(0.8360);transform-origin:right top;">4 290,00</div>
<div class="t" style="right:232.70px;top:501px;font-size:13px;line-height:15.60px;color:#000;transform:scaleX(0.8360);transform-origin:right top;">4 400,00</div>
<div class="t" style="right:143.10px;top:501px;font-size:13px;line-height:15.60px;color:#000;transform:scaleX(0.8360);transform-origin:right top;">+110,00</div>
<div class="t" style="right:65.30px;top:501px;font-size:13px;line-height:15.60px;color:#000;transform:scaleX(0.8360);transform-origin:right top;">1 950,00</div>
<div class="t" style="right:8.10px;top:501px;font-size:13px;line-height:15.60px;color:#000;transform:scaleX(0.8360);transform-origin:right top;">2</div>
<div class="t" style="left:9.70px;top:518px;font-size:13px;line-height:15.60px;color:#000;transform:scaleX(0.8360);transform-origin:left top;">Кросівки Ч black замша Турція 45(р)</div>
<div class="t" style="left:298.20px;top:518px;font-size:13px;line-height:15.60px;color:#000;transform:scaleX(0.8360);transform-origin:left top;">2911200012350</div>
<div class="t" style="right:559.90px;top:518px;font-size:13px;line-height:15.60px;color:#000;transform:scaleX(0.8360);transform-origin:right top;">50,00</div>
<div class="t" style="left:445.00px;top:518px;font-size:13px;line-height:15.60px;color:#000;transform:scaleX(0.8360);transform-origin:left top;">$</div>
<div class="t" style="right:498.60px;top:518px;font-size:13px;line-height:15.60px;color:#000;transform:scaleX(0.8360);transform-origin:right top;">40</div>
<div class="t" style="right:409.90px;top:518px;font-size:13px;line-height:15.60px;color:#000;transform:scaleX(0.8360);transform-origin:right top;">2 000,00</div>
<div class="t" style="right:360.20px;top:518px;font-size:13px;line-height:15.60px;color:#000;transform:scaleX(0.8360);transform-origin:right top;">120%</div>
<div class="t" style="right:296.10px;top:518px;font-size:13px;line-height:15.60px;color:#000;transform:scaleX(0.8360);transform-origin:right top;">4 290,00</div>
<div class="t" style="right:232.70px;top:518px;font-size:13px;line-height:15.60px;color:#000;transform:scaleX(0.8360);transform-origin:right top;">4 400,00</div>
<div class="t" style="right:143.10px;top:518px;font-size:13px;line-height:15.60px;color:#000;transform:scaleX(0.8360);transform-origin:right top;">+110,00</div>
<div class="t" style="right:65.30px;top:518px;font-size:13px;line-height:15.60px;color:#000;transform:scaleX(0.8360);transform-origin:right top;">1 950,00</div>
<div class="t" style="right:8.10px;top:518px;font-size:13px;line-height:15.60px;color:#000;transform:scaleX(0.8360);transform-origin:right top;">2</div>
<div class="t" style="left:11.50px;top:562px;font-size:13px;line-height:15.60px;color:#000;transform:scaleX(0.8360);transform-origin:left top;">Всего 15 товаров</div>
<div class="t" style="right:143.50px;top:562px;font-size:13px;line-height:15.60px;color:#000;transform:scaleX(0.8360);transform-origin:right top;">855,00</div>
<div class="t" style="right:11.50px;top:562px;font-size:13px;line-height:15.60px;color:#000;transform:scaleX(0.8360);transform-origin:right top;">29</div>
</body>
</html>
